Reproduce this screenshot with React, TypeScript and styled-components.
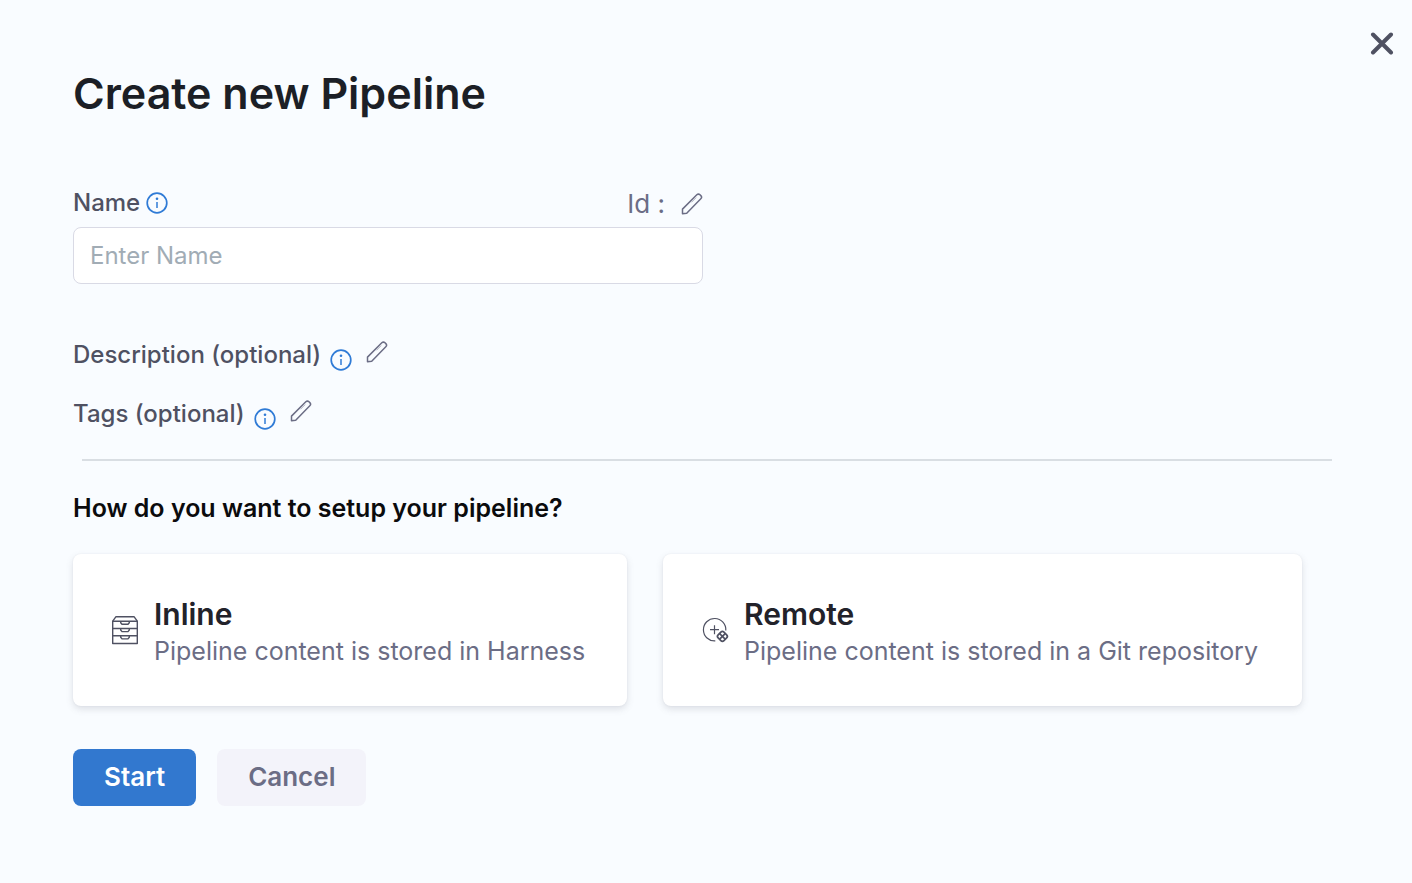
import React, { useState } from "react";
import styled, { createGlobalStyle } from "styled-components";

const GlobalStyle = createGlobalStyle`
  *, *::before, *::after { box-sizing: border-box; }
  body {
    margin: 0;
    background: #f9fcff;
    font-family: Inter, "Liberation Sans", sans-serif;
    -webkit-font-smoothing: antialiased;
  }
  button, input { font-family: inherit; }
`;

const Dialog = styled.main`
  position: relative;
  min-height: 100vh;
  padding: 65px 80px 76px 73px;
  background: #f9fcff;
`;

const IconButton = styled.button`
  display: inline-flex;
  padding: 0;
  border: 0;
  background: none;
  color: #6b6d85;
  cursor: pointer;
`;

const CloseButton = styled(IconButton)`
  position: absolute;
  top: 31px;
  right: 18px;
  color: #4f5162;
`;

const Title = styled.h1`
  margin: 0 0 68px;
  font-size: 43px;
  line-height: 56px;
  font-weight: 600;
  color: #1c1f26;
`;

const NameField = styled.div`
  max-width: 630px;
  margin-bottom: 57px;
`;

const FieldHeader = styled.div`
  display: flex;
  align-items: center;
  justify-content: space-between;
  height: 28px;
  margin-bottom: 10px;
`;

const LabelGroup = styled.div`
  display: flex;
  align-items: center;
  gap: 6px;
`;

const labelText = `
  font-size: 24px;
  line-height: 28px;
  font-weight: 500;
  color: #4f5162;
`;

const Label = styled.label`
  ${labelText}
`;

const IdGroup = styled.div`
  display: flex;
  align-items: center;
  gap: 16px;
  padding-top: 2px;
  font-size: 26px;
  line-height: 28px;
  color: #6b6d85;
`;

const TextInput = styled.input`
  display: block;
  width: 100%;
  height: 57px;
  padding: 0 16px;
  border: 1px solid #d9dae5;
  border-radius: 8px;
  background: #fff;
  font-size: 24px;
  color: #22222a;
  outline: none;
  &::placeholder { color: #a1acb5; opacity: 1; }
  &:focus-visible { border-color: #0278d5; }
`;

const OptionalList = styled.div`
  display: grid;
  gap: 29px;
`;

const OptionalRow = styled.div`
  display: flex;
  align-items: center;
  height: 30px;
`;

const OptionalText = styled.span`
  ${labelText}
  margin-right: 9px;
  padding-bottom: 2px;
`;

const InfoSlot = styled.span`
  display: flex;
  align-self: flex-end;
  margin-right: 14px;
`;

const EditSlot = styled.span`
  display: flex;
  align-self: flex-start;
`;

const Divider = styled.hr`
  height: 2px;
  margin: 29px 0 31px 9px;
  border: 0;
  background: #d9dee3;
`;

const Question = styled.h2`
  margin: 0 0 30px;
  font-size: 25px;
  line-height: 32px;
  font-weight: 600;
  color: #0b0b0d;
`;

const Cards = styled.div`
  display: grid;
  grid-template-columns: 554fr 639fr;
  gap: 36px;
  max-width: 1229px;
  margin-bottom: 43px;
`;

const Card = styled.button`
  display: flex;
  align-items: center;
  gap: 14px;
  min-height: 152px;
  padding: 0 36px 0 37px;
  border: 0;
  border-radius: 8px;
  background: #fff;
  box-shadow: 0 0 2px rgba(40, 41, 61, 0.06), 0 3px 7px rgba(96, 97, 112, 0.18);
  text-align: left;
  cursor: pointer;
`;

const CardText = styled.span`
  display: grid;
  padding-top: 4px;
`;

const CardTitle = styled.span`
  font-size: 30px;
  line-height: 38px;
  font-weight: 600;
  color: #22222a;
`;

const CardCaption = styled.span`
  font-size: 25px;
  line-height: 36px;
  color: #6b6d85;
`;

const Actions = styled.div`
  display: flex;
  gap: 21px;
`;

const ActionButton = styled.button<{ $primary?: boolean }>`
  height: 57px;
  padding: 0 31px 2px;
  border: 0;
  border-radius: 8px;
  background: ${(p) => (p.$primary ? "#3278cf" : "#f3f3fa")};
  color: ${(p) => (p.$primary ? "#fff" : "#6b6d85")};
  font-size: 26px;
  line-height: 32px;
  font-weight: 600;
  cursor: pointer;
`;

const InfoIcon = () => (
  <svg width="22" height="22" viewBox="0 0 22 22" fill="none" aria-hidden="true">
    <circle cx="11" cy="11" r="9.8" stroke="#2f7bd6" strokeWidth="1.7" />
    <circle cx="11" cy="6.7" r="1.3" fill="#2f7bd6" />
    <path d="M11 10v6" stroke="#2f7bd6" strokeWidth="1.5" />
  </svg>
);

const PencilIcon = () => (
  <svg width="22" height="22" viewBox="0 0 22 22" fill="none" stroke="currentColor" strokeWidth="1.5" strokeLinejoin="round" aria-hidden="true">
    <path d="M1.500 20.700v-4.600L15.800 1.800c.9-.9 2.300-.9 3.200 0l.8.8c.9.9.9 2.300 0 3.200L5.700 20.200l-4.200.500z" />
    <path d="M10.500 9.300l4.700-4.700" strokeWidth="1" opacity=".5" />
  </svg>
);

const CloseIcon = () => (
  <svg width="24" height="24" viewBox="0 0 24 24" stroke="currentColor" strokeWidth="4" strokeLinecap="round" aria-hidden="true">
    <path d="M3 3.500l18 18M21 3.500L3 21.500" />
  </svg>
);

const DrawersIcon = () => (
  <svg width="30" height="30" viewBox="0 0 30 30" fill="none" stroke="#4f5162" strokeWidth="1.400" strokeLinejoin="round" aria-hidden="true">
    <path d="M2.700 6.200L6 1.700h18l3.300 4.500v22.300H2.700z" />
    <path d="M2.700 6.200h24.600M2.700 13.500h24.600M2.700 20.800h24.600" />
    <path d="M10.700 6.200v1.500l1.300 1.600h6l1.300-1.600V6.200M10.700 13.500V15l1.300 1.600h6l1.300-1.600v-1.500M10.700 20.800v1.500l1.300 1.600h6l1.300-1.600v-1.500" />
  </svg>
);

const RemoteIcon = () => (
  <svg width="30" height="30" viewBox="0 0 30 30" fill="none" stroke="#4f5162" strokeWidth="1.200" aria-hidden="true">
    <path d="M15.300 25.900A11.200 11.200 0 1 1 25.800 15.500" />
    <path d="M14.500 10.200v9M10 14.700h9" />
    <g strokeWidth="1.700">
      <rect x="18.300" y="17.300" width="8.200" height="8.200" rx="2.200" transform="rotate(45 22.400 21.400)" />
      <path d="M19.400 18.400l6 6M25.400 18.400l-6 6" />
    </g>
  </svg>
);

const optionalFields = ["Description", "Tags"];

const storageOptions = [
  { title: "Inline", caption: "Pipeline content is stored in Harness", Icon: DrawersIcon },
  { title: "Remote", caption: "Pipeline content is stored in a Git repository", Icon: RemoteIcon },
];

export default function App() {
  const [name, setName] = useState("");

  return (
    <>
      <GlobalStyle />
      <Dialog>
        <CloseButton type="button" aria-label="Close">
          <CloseIcon />
        </CloseButton>
        <Title>Create new Pipeline</Title>

        <NameField>
          <FieldHeader>
            <LabelGroup>
              <Label htmlFor="pipeline-name">Name</Label>
              <InfoIcon />
            </LabelGroup>
            <IdGroup>
              <span>Id :</span>
              <IconButton type="button" aria-label="Edit id">
                <PencilIcon />
              </IconButton>
            </IdGroup>
          </FieldHeader>
          <TextInput
            id="pipeline-name"
            placeholder="Enter Name"
            value={name}
            onChange={(e) => setName(e.target.value)}
          />
        </NameField>

        <OptionalList>
          {optionalFields.map((field) => (
            <OptionalRow key={field}>
              <OptionalText>{field} (optional)</OptionalText>
              <InfoSlot>
                <InfoIcon />
              </InfoSlot>
              <EditSlot>
                <IconButton type="button" aria-label={`Edit ${field.toLowerCase()}`}>
                  <PencilIcon />
                </IconButton>
              </EditSlot>
            </OptionalRow>
          ))}
        </OptionalList>

        <Divider />

        <Question>How do you want to setup your pipeline?</Question>
        <Cards>
          {storageOptions.map(({ title, caption, Icon }) => (
            <Card key={title} type="button">
              <Icon />
              <CardText>
                <CardTitle>{title}</CardTitle>
                <CardCaption>{caption}</CardCaption>
              </CardText>
            </Card>
          ))}
        </Cards>

        <Actions>
          <ActionButton type="button" $primary>
            Start
          </ActionButton>
          <ActionButton type="button">Cancel</ActionButton>
        </Actions>
      </Dialog>
    </>
  );
}
